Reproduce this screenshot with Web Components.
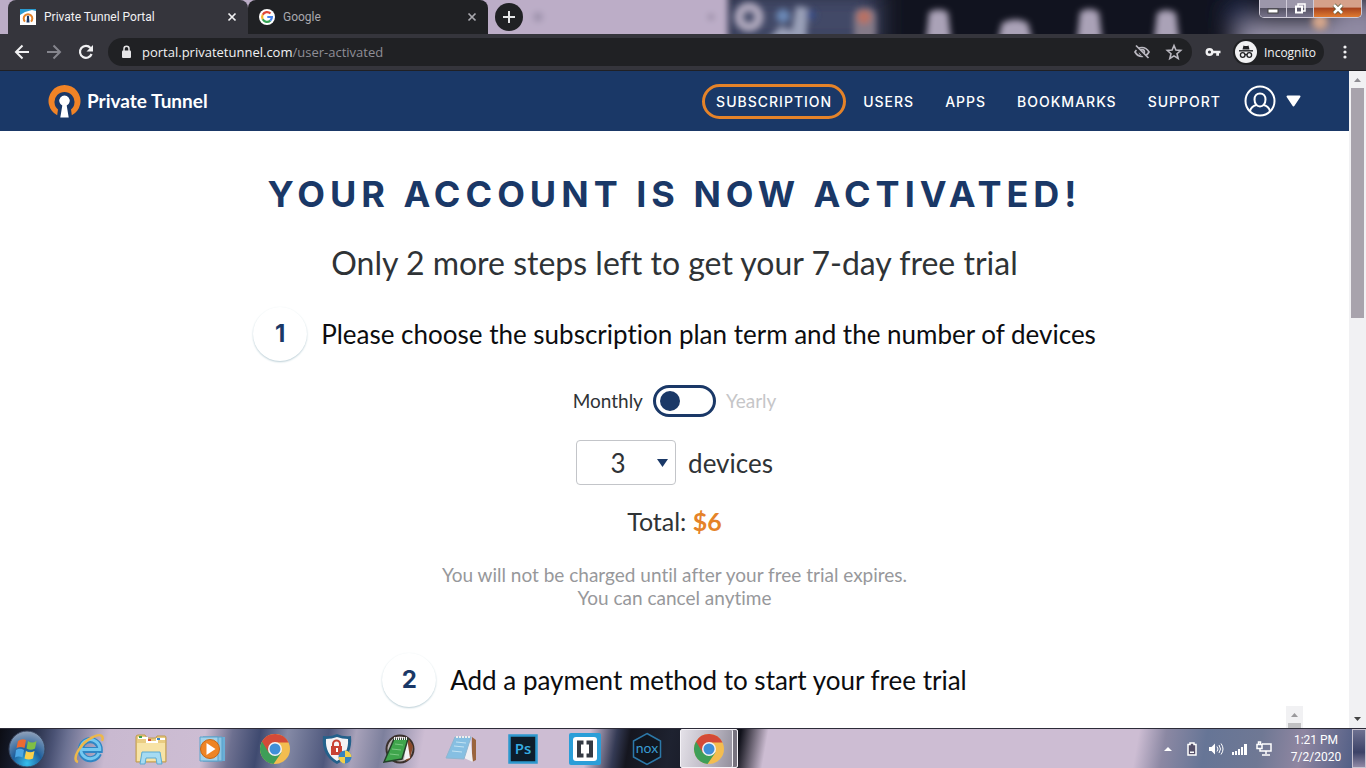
<!DOCTYPE html>
<html lang="en">
<head>
<meta charset="utf-8">
<meta name="viewport" content="width=device-width, initial-scale=1">
<title>Private Tunnel Portal</title>
<style>
    html, body {
        height: 100%;
    }

    body {
        margin: 0;
        display: flex;
        flex-direction: column;
        overflow: hidden;
        font-family: "Open Sans", "Noto Sans", sans-serif;
        --navy: #1a3867;
        --orange: #e58329;
        --frame: #35353c;
        --field: #202124;
        --brand-font: Lato, "Open Sans", sans-serif;
        --title-font: Inter, "Open Sans", sans-serif;
    }
</style>
</head>
<body>

<browser-window>
    <browser-tab slot="tabs" active>
        <svg slot="icon" width="16" height="16" viewBox="0 0 16 16">
            <rect width="16" height="16" fill="#fff"/>
            <path d="M0 0h16v2l-4-1-7 2-5 3z" fill="#2a9bd0"/>
            <path d="M5 12.600A4.300 4.300 0 1 1 11 12.600" fill="none" stroke="#e58329" stroke-width="2"/>
            <path d="M7 8.500a1.200 1.200 0 1 1 2 0l.5 5h-3z" fill="#1a3867"/>
        </svg>
        Private Tunnel Portal
    </browser-tab>
    <browser-tab slot="tabs">
        <svg slot="icon" width="16" height="16" viewBox="0 0 16 16">
            <circle cx="8" cy="8" r="8" fill="#fff"/>
            <g fill="none" stroke-width="2.200">
                <path d="M11.500 4.500A4.900 4.900 0 0 0 3.700 5.700" stroke="#e04637"/>
                <path d="M3.700 5.700a4.900 4.900 0 0 0 0 4.600" stroke="#f3b72c"/>
                <path d="M3.700 10.300a4.900 4.900 0 0 0 7.600 1.300" stroke="#36a355"/>
                <path d="M11.300 11.600A4.900 4.900 0 0 0 12.900 8H8.300" stroke="#4483ee"/>
            </g>
        </svg>
        Google
    </browser-tab>
    <site-header>
        <nav-link current>Subscription</nav-link>
        <nav-link>Users</nav-link>
        <nav-link>Apps</nav-link>
        <nav-link>Bookmarks</nav-link>
        <nav-link>Support</nav-link>
    </site-header>
    <activation-page>
        <step-heading number="1">Please choose the subscription plan term and the number of devices</step-heading>
        <plan-picker></plan-picker>
        <step-heading number="2">Add a payment method to start your free trial</step-heading>
    </activation-page>
</browser-window>

<task-bar></task-bar>

<script>
function define(name, html) {
    const template = document.createElement('template');
    template.innerHTML = html;

    customElements.define(name, class extends HTMLElement {
        constructor() {
            super();
            this.attachShadow({mode: 'open'});
            this.shadowRoot.appendChild(template.content.cloneNode(true));
        }
    });
}

// what shows through the aero glass behind the tabs
define('glass-backdrop', `
<style>
    :host {
        position: absolute;
        inset: 0;
        overflow: hidden;
        background: #11131f;
    }
    svg {
        display: block;
    }
</style>
<svg width="1366" height="40" viewBox="0 0 1366 40" aria-hidden="true">
    <defs>
        <filter id="soft" x="-20%" y="-20%" width="140%" height="140%"><feGaussianBlur stdDeviation="3"/></filter>
        <filter id="wide" x="-50%" y="-50%" width="200%" height="200%"><feGaussianBlur stdDeviation="12"/></filter>
    </defs>
    <g filter="url(#wide)">
        <rect x="720" y="-10" width="160" height="60" fill="#424a68"/>
        <rect x="1235" y="20" width="150" height="40" fill="#9a94ab"/>
        <circle cx="1240" cy="14" r="14" fill="#25355f"/>
        <rect x="1330" y="0" width="60" height="40" fill="#8d87a0"/>
    </g>
    <g filter="url(#soft)">
        <rect x="-20" y="-10" width="748" height="60" rx="6" fill="#bcadc7"/>
        <circle cx="749" cy="17" r="10" fill="none" stroke="#b0a9bd" stroke-width="9"/>
        <circle cx="783" cy="16" r="7" fill="#6a88b5"/>
        <path d="M768 40l12-14 12 4 4-24 12 2-2 32z" fill="#9aa0b8"/>
        <circle cx="811" cy="15" r="5" fill="#394d87"/>
        <rect x="854" y="8" width="22" height="34" rx="8" fill="#847a88"/>
        <circle cx="864" cy="17" r="7" fill="#b97162"/>
        <path d="M926 40l3-28q10-5 19 0l3 28zM998 40l4-17q14-7 26 0l4 17zM1077 40l3-28q9-6 19 0l3 28zM1154 40l3-27q9-6 19 0l3 27z" fill="#aaa2b7"/>
        <circle cx="538" cy="17" r="5" fill="#9d92ab"/>
        <circle cx="711" cy="17" r="3" fill="#8f849d"/>
        <circle cx="1320" cy="22" r="8" fill="#d3a58b"/>
    </g>
</svg>
`);

define('browser-tab', `
<style>
    :host {
        display: flex;
        align-items: center;
        gap: 8px;
        box-sizing: border-box;
        width: 240px;
        height: 34px;
        padding: 0 10px 0 11px;
        border-radius: 8px 8px 0 0;
        background: var(--field);
        color: #a9a8ae;
        font-family: Roboto, "Open Sans", sans-serif;
        font-size: 12px;
        line-height: 16px;
        white-space: nowrap;
    }
    :host([active]) {
        padding-left: 12px;
        background: var(--frame);
        color: #f1f1f3;
    }
    .title {
        flex: 1;
    }
    ::slotted(svg) {
        display: block;
    }
    button {
        display: flex;
        padding: 0;
        border: 0;
        background: none;
        color: inherit;
    }
</style>
<slot name="icon"></slot>
<span class="title"><slot></slot></span>
<button aria-label="Close tab">
    <svg width="12" height="12" viewBox="0 0 12 12"><path d="M2.500 2.500l7 7m0-7l-7 7" stroke="currentColor" stroke-width="1.700"/></svg>
</button>
`);

define('window-controls', `
<style>
    :host {
        display: flex;
        align-self: flex-start;
        margin-left: auto;
        margin-right: 4px;
        border: 1px solid #cfcbd8;
        border-top: 0;
        border-radius: 0 0 5px 5px;
        overflow: hidden;
        position: relative;
    }
    button {
        display: flex;
        align-items: center;
        justify-content: center;
        width: 27px;
        height: 17px;
        padding: 0;
        border: 0;
        border-right: 1px solid #cfcbd8;
        background: linear-gradient(#9c97aa 45%, #565365 50%, #77738a);
    }
    .close {
        width: 47px;
        border-right: 0;
        background: linear-gradient(#d5a18a 40%, #a9451f 50%, #e07b31);
    }
</style>
<button aria-label="Minimize"><svg width="14" height="12" viewBox="0 0 14 12"><rect x="2" y="6" width="10" height="4" fill="#fff" stroke="#444" stroke-width="1"/></svg></button>
<button aria-label="Restore"><svg width="14" height="13" viewBox="0 0 14 13"><path d="M5 4V2h7v7h-2" fill="none" stroke="#fff" stroke-width="1.500"/><rect x="3" y="4.500" width="6" height="6" fill="none" stroke="#fff" stroke-width="2"/></svg></button>
<button class="close" aria-label="Close"><svg width="14" height="12" viewBox="0 0 14 12"><path d="M3 2l8 8m0-8l-8 8" stroke="#553" stroke-width="4"/><path d="M3 2l8 8m0-8l-8 8" stroke="#fff" stroke-width="2.600"/></svg></button>
`);

define('address-bar', `
<style>
    :host {
        display: flex;
        align-items: center;
        box-sizing: border-box;
        height: 37px;
        padding: 0 11px 0 12px;
        gap: 8px;
        background: var(--frame);
        border-bottom: 1px solid #202024;
        color: #f1f1f3;
    }
    svg {
        display: block;
    }
    button {
        padding: 0;
        border: 0;
        background: none;
        color: inherit;
        font: inherit;
    }
    .nav {
        display: flex;
        gap: 12px;
    }
    .field {
        flex: 1;
        display: flex;
        align-items: center;
        gap: 12px;
        height: 28px;
        margin-left: 4px;
        padding: 0 8px 0 10px;
        border-radius: 14px;
        background: var(--field);
        font-size: 13px;
        line-height: 18px;
    }
    .url {
        flex: 1;
        margin-left: -4px;
    }
    .url span {
        color: #8f8e96;
    }
    .incognito {
        display: flex;
        align-items: center;
        gap: 7px;
        height: 26px;
        padding: 0 8px 0 2px;
        border-radius: 13px;
        background: var(--field);
        font-size: 12px;
    }
    .right {
        display: flex;
        align-items: center;
        gap: 11px;
        margin-left: 4px;
    }
</style>
<div class="nav">
    <button aria-label="Back"><svg width="20" height="20" viewBox="0 0 20 20" fill="none" stroke="currentColor" stroke-width="2"><path d="M17 10H4m6.500-6.500L4 10l6.500 6.500"/></svg></button>
    <button aria-label="Forward"><svg width="20" height="20" viewBox="0 0 20 20" fill="none" stroke="#85858d" stroke-width="2"><path d="M3 10h13M9.500 3.500L16 10l-6.500 6.500"/></svg></button>
    <button aria-label="Reload"><svg width="20" height="20" viewBox="0 0 20 20"><path d="M15.600 12A6 6 0 1 1 14.500 5.900" fill="none" stroke="currentColor" stroke-width="2.200"/><path d="M17 3v6.500h-6.500z" fill="currentColor"/></svg></button>
</div>
<div class="field">
    <svg width="16" height="16" viewBox="0 0 16 16"><rect x="4" y="6.500" width="9" height="7.500" rx="1" fill="#e6e6e8"/><path d="M6 7V4.700a2.500 2.500 0 0 1 5 0V7" fill="none" stroke="#e6e6e8" stroke-width="1.500"/></svg>
    <div class="url">portal.privatetunnel.com<span>/user-activated</span></div>
    <button aria-label="Third-party cookies blocked"><svg width="20" height="20" viewBox="0 0 20 20" fill="none" stroke="#bab8c0" stroke-width="1.700"><path d="M3 10c3.500-6 10.500-6 14 0-3.500 6-10.500 6-14 0z"/><circle cx="10" cy="10" r="2.400"/><path d="M3 4.500L15.500 17" stroke="#202124" stroke-width="3"/><path d="M4 3.500L16.500 16"/></svg></button>
    <button aria-label="Bookmark this page"><svg width="20" height="20" viewBox="0 0 20 20" fill="none" stroke="#bab8c0" stroke-width="1.600"><path d="M10 3.500l1.900 4.600 4.800.4-3.700 3.200 1.200 4.800-4.200-2.600-4.200 2.600L7 11.700 3.300 8.500l4.800-.4z"/></svg></button>
</div>
<div class="right">
    <button aria-label="Saved passwords"><svg width="18" height="16" viewBox="0 0 18 16"><circle cx="5.500" cy="8" r="2.800" fill="none" stroke="#f1f1f3" stroke-width="2.400"/><path d="M8 6.800h8.500v2.400H15v2.600h-2.800V9.200H8z" fill="#f1f1f3"/></svg></button>
    <div class="incognito">
        <svg width="22" height="22" viewBox="0 0 22 22"><circle cx="11" cy="11" r="11" fill="#f1f1f3"/><path d="M7.500 8.500L8.500 4.500q2.500 1 5 0l1 4z" fill="#202124"/><path d="M4 9.800h14" stroke="#202124" stroke-width="1.400"/><g fill="none" stroke="#202124" stroke-width="1.300"><circle cx="7.700" cy="14" r="2.300"/><circle cx="14.300" cy="14" r="2.300"/><path d="M10 14q1-1 2 0"/></g></svg>
        Incognito
    </div>
    <button aria-label="Menu"><svg width="20" height="18" viewBox="0 0 20 18" fill="#f1f1f3"><circle cx="10" cy="4" r="1.600"/><circle cx="10" cy="9" r="1.600"/><circle cx="10" cy="14" r="1.600"/></svg></button>
</div>
`);

define('scroll-track', `
<style>
    :host {
        display: flex;
        flex-direction: column;
        width: 17px;
        background: #f1f1f3;
    }
    svg {
        display: block;
    }
    .thumb {
        height: 35%;
        margin: 0 2px auto;
        background: #a8a3ac;
    }
</style>
<svg width="17" height="17" viewBox="0 0 17 17"><path d="M5 11l3.500-4 3.500 4z" fill="#8f8d93"/></svg>
<div class="thumb"></div>
<svg width="17" height="17" viewBox="0 0 17 17"><path d="M5 6h7l-3.500 4z" fill="#444"/></svg>
`);

define('browser-window', `
<style>
    :host {
        flex: 1;
        display: flex;
        flex-direction: column;
        min-height: 0;
    }
    .tabs {
        position: relative;
        display: flex;
        align-items: center;
        height: 34px;
        padding-left: 8px;
    }
    .tabs ::slotted(browser-tab) {
        position: relative;
    }
    .new-tab {
        position: relative;
        display: flex;
        align-items: center;
        justify-content: center;
        width: 28px;
        height: 28px;
        margin-left: 7px;
        padding: 0;
        border: 0;
        border-radius: 50%;
        background: var(--field);
    }
    .view {
        flex: 1;
        display: flex;
        min-height: 0;
    }
    main {
        position: relative;
        flex: 1;
        background: #fff;
        overflow: hidden;
    }
    /* a second frame peeks out over the page bottom */
    .frame-scroll {
        position: absolute;
        right: 46px;
        bottom: 0;
        width: 17px;
        height: 22px;
        background: #f1f1f3;
    }
    .frame-scroll svg {
        display: block;
    }
</style>
<div class="tabs">
    <glass-backdrop></glass-backdrop>
    <slot name="tabs"></slot>
    <button class="new-tab" aria-label="New tab"><svg width="14" height="14" viewBox="0 0 14 14"><path d="M7 1v12M1 7h12" stroke="#e6e6e8" stroke-width="2"/></svg></button>
    <window-controls></window-controls>
</div>
<address-bar></address-bar>
<div class="view">
    <main>
        <slot></slot>
        <div class="frame-scroll"><svg width="17" height="22" viewBox="0 0 17 22"><path d="M5 11l3.500-4 3.500 4z" fill="#9a999c"/><path d="M2 17h13v5H2z" fill="#c1c1c3"/></svg></div>
    </main>
    <scroll-track></scroll-track>
</div>
`);

define('nav-link', `
<style>
    :host {
        display: block;
    }
    a {
        display: block;
        padding: 5px 11px;
        border: 3px solid transparent;
        border-radius: 18px;
        color: #fff;
        font-family: var(--title-font);
        font-size: 14px;
        font-weight: 500;
        line-height: 19px;
        letter-spacing: 1px;
        text-decoration: none;
        text-transform: uppercase;
    }
    :host([current]) a {
        border-color: var(--orange);
    }
</style>
<a href="#"><slot></slot></a>
`);

define('site-header', `
<style>
    :host {
        display: flex;
        align-items: center;
        justify-content: space-between;
        height: 60px;
        padding: 0 48px;
        background: var(--navy);
        color: #fff;
    }
    svg {
        display: block;
    }
    .logo {
        display: flex;
        align-items: center;
        gap: 6px;
        color: #fff;
        font-family: var(--brand-font);
        font-size: 19px;
        font-weight: 700;
        line-height: 24px;
        text-decoration: none;
    }
    nav {
        display: flex;
        align-items: center;
        gap: 3px;
    }
    .account {
        display: flex;
        align-items: center;
        gap: 10px;
        margin-left: 6px;
        padding: 0;
        border: 0;
        background: none;
    }
</style>
<a class="logo" href="#">
    <svg width="33" height="33" viewBox="0 0 33 33"><path d="M9.200 30.300L10 24.500a10 10 0 1 1 13 0l.8 5.800A16 16 0 1 0 9.200 30.300z" fill="#f08326"/><path d="M14.300 20.500a5.200 5.200 0 1 1 4.400 0l2 12h-8.400z" fill="#fff"/></svg>
    Private Tunnel
</a>
<nav>
    <slot></slot>
    <button class="account" aria-label="Account">
        <svg width="32" height="32" viewBox="0 0 32 32" fill="none" stroke="#fff" stroke-width="2"><circle cx="16" cy="16" r="14.500"/><path d="M16 8.500c3.500 0 5.500 2.700 5.500 6 0 4-2.500 7-5.500 7s-5.500-3-5.500-7c0-3.300 2-6 5.500-6z"/><path d="M6 26c1-4 3.500-5.500 7-6m13 6c-1-4-3.500-5.500-7-6"/></svg>
        <svg width="15" height="12" viewBox="0 0 15 12"><path d="M1.500 1.500h12l-6 9z" fill="#fff" stroke="#fff" stroke-width="2" stroke-linejoin="round"/></svg>
    </button>
</nav>
`);

define('activation-page', `
<style>
    :host {
        display: flex;
        flex-direction: column;
        align-items: center;
        padding-top: 40px;
        color: #2f3336;
        font-family: var(--brand-font);
        font-variant-ligatures: none;
    }
    h1, p {
        margin: 0;
        text-align: center;
    }
    h1 {
        color: var(--navy);
        font-family: var(--title-font);
        font-size: 36px;
        font-weight: 700;
        line-height: 46px;
        letter-spacing: 5px;
        text-transform: uppercase;
    }
    p {
        margin: 24px 0 22px;
        font-size: 32px;
        line-height: 44px;
    }
</style>
<h1>Your account is now activated!</h1>
<p>Only 2 more steps left to get your 7-day free trial</p>
<slot></slot>
`);

customElements.define('step-heading', class extends HTMLElement {
    constructor() {
        super();
        this.attachShadow({mode: 'open'});
        this.shadowRoot.innerHTML = `
<style>
    :host {
        display: block;
    }
    h2 {
        display: flex;
        align-items: center;
        gap: 14px;
        margin: 0;
        color: #0c0d0f;
        font-size: 26px;
        font-weight: 400;
        line-height: 32px;
    }
    .number {
        flex: none;
        width: 54px;
        height: 54px;
        border-radius: 50%;
        box-shadow: 0 1px 2px #b9cdd5;
        color: var(--navy);
        font-family: var(--title-font);
        font-size: 24px;
        font-weight: 700;
        line-height: 54px;
        text-align: center;
    }
</style>
<h2><span class="number">${this.getAttribute('number')}</span><slot></slot></h2>
`;
    }
});

define('plan-picker', `
<style>
    :host {
        display: flex;
        flex-direction: column;
        align-items: center;
        padding: 24px 0 44px;
    }
    .term {
        display: flex;
        align-items: center;
        gap: 10px;
        font-size: 19px;
        line-height: 32px;
    }
    .yearly {
        color: #c6c6c8;
    }
    input {
        appearance: none;
        display: flex;
        align-items: center;
        box-sizing: border-box;
        width: 63px;
        height: 32px;
        margin: 0;
        padding: 0 4px;
        border: 3px solid var(--navy);
        border-radius: 16px;
    }
    input::before {
        content: "";
        width: 20px;
        height: 20px;
        border-radius: 50%;
        background: var(--navy);
    }
    input:checked {
        justify-content: flex-end;
    }
    .devices {
        display: flex;
        align-items: center;
        gap: 12px;
        margin: 23px 0 20px;
        font-size: 26px;
        line-height: 32px;
    }
    .select {
        display: grid;
        align-items: center;
    }
    .select > * {
        grid-area: 1 / 1;
    }
    .select svg {
        justify-self: end;
        margin-right: 7px;
        pointer-events: none;
    }
    select {
        appearance: none;
        box-sizing: border-box;
        width: 100px;
        height: 45px;
        padding: 0 16px 0 0;
        border: 1px solid #c3c5c9;
        border-radius: 4px;
        background: #fff;
        color: inherit;
        font: inherit;
        text-align-last: center;
    }
    .total {
        font-size: 25px;
        line-height: 32px;
    }
    .total strong {
        color: var(--orange);
    }
    .note {
        margin-top: 26px;
        color: #97989b;
        font-size: 19px;
        line-height: 23px;
        text-align: center;
    }
</style>
<div class="term">
    <label for="term">Monthly</label>
    <input type="checkbox" role="switch" id="term">
    <label class="yearly" for="term">Yearly</label>
</div>
<div class="devices">
    <div class="select">
        <select id="devices">
            <option>1</option>
            <option>2</option>
            <option selected>3</option>
            <option>4</option>
            <option>5</option>
        </select>
        <svg width="13" height="10" viewBox="0 0 13 10"><path d="M1 1h11L6.500 9z" fill="#1a3867"/></svg>
    </div>
    <label for="devices">devices</label>
</div>
<div class="total">Total: <strong>$6</strong></div>
<div class="note">You will not be charged until after your free trial expires.<br>You can cancel anytime</div>
`);

define('task-button', `
<style>
    :host {
        display: block;
        width: 62px;
    }
    button {
        display: flex;
        align-items: center;
        justify-content: center;
        box-sizing: border-box;
        width: 58px;
        height: 39px;
        padding: 0;
        border: 1px solid transparent;
        border-radius: 2px;
        background: none;
    }
    :host([active]) button {
        border-color: #f4f2f7;
        background: linear-gradient(100deg, #e4e1e8, #bcb8c4 50%, #8b8895);
        box-shadow: inset -4px 0 #77737f, inset -5px 0 #f4f2f7;
    }
</style>
<button><slot></slot></button>
`);

const chromeIcon = `
<svg width="32" height="32" viewBox="0 0 32 32">
    <circle cx="16" cy="16" r="15" fill="#f3bd50"/>
    <path d="M16 16L3 8.500A15 15 0 0 0 14.500 31L22.500 19.500z" fill="#3e9e58"/>
    <path d="M3 8.500A15 15 0 0 1 29.500 9.500H16L10 20z" fill="#d44a38"/>
    <circle cx="16" cy="16" r="7" fill="#f4f2f3"/>
    <circle cx="16" cy="16" r="5.500" fill="#3f8fd8"/>
</svg>`;

define('task-bar', `
<style>
    :host {
        display: flex;
        align-items: center;
        height: 39px;
        border-top: 1px solid #2c2b38;
        padding-left: 8px;
        background: linear-gradient(100deg, #0c0d14 0, #1b2338 2%, #4a5274 4%, #6b7192 5%, #c9b9d0 8%, #cdbdd3 15%, #6d7090 17%, #3f4a70 19%, #858aa6 21%, #4f587d 24%, #a8a2ba 26%, #7d809d 28%, #cdbdd3 31%, #cdbdd3 43%, #343a54 45%, #15161f 46%, #1e2230 49%, #10111a 54%, #cdbdd3 56%, #cdbdd3 83%, #8b88a3 85%, #667596 88%, #6f7894 92%, #8f86a1 95%, #43557f 100%);
        color: #fff;
    }
    svg {
        display: block;
    }
    .start {
        width: 52px;
        padding: 0;
        border: 0;
        background: none;
    }
    .tray {
        display: flex;
        align-items: center;
        gap: 8px;
        margin-left: auto;
    }
    .clock {
        width: 60px;
        margin-left: 6px;
        font-family: Roboto, "Open Sans", sans-serif;
        font-size: 12px;
        line-height: 17px;
        text-align: center;
    }
    .desktop {
        align-self: stretch;
        width: 14px;
        margin-left: 6px;
        padding: 0;
        border: 1px solid #c7c2d0;
        background: linear-gradient(#6e7191, #3c4267 60%, #9089a5);
    }
</style>
<button class="start" aria-label="Start">
    <svg width="38" height="38" viewBox="0 0 38 38">
        <defs><radialGradient id="orb" cx=".5" cy=".9" r=".9"><stop offset="0" stop-color="#35c0ee"/><stop offset=".45" stop-color="#1f5f9c"/><stop offset="1" stop-color="#93a3bb"/></radialGradient></defs>
        <circle cx="19" cy="19" r="18" fill="url(#orb)" stroke="#39455e"/>
        <path d="M10 11q4-3 8-1l-1.500 8q-4-2-8 0z" fill="#ec6a32"/><path d="M20 11q4 3 8.500 0L27 18.500q-4 2.500-8.500 0z" fill="#7fbf45"/><path d="M8 20q4-2.500 8 0l-1.500 7.500q-4-2-7.500 0z" fill="#4ba7e5"/><path d="M18 21q4 2.500 8.500 0L25 28.500q-4 2-8.500 0z" fill="#fad04b"/>
    </svg>
</button>
<task-button title="Internet Explorer"><svg width="32" height="32" viewBox="0 0 32 32">
    <g fill="none"><path d="M26 20.500A9.500 9.500 0 1 1 26.800 17H9" stroke="#2f86c4" stroke-width="6"/><path d="M26 20A9.500 9.500 0 1 1 26.800 16.500H9" stroke="#74c8f0" stroke-width="3"/>
    <path d="M5 29C-2 27 7 10 20 4c8-4 11-1 9 4" stroke="#edb849" stroke-width="2.500"/></g></svg></task-button>
<task-button title="Explorer"><svg width="32" height="32" viewBox="0 0 32 32">
    <path d="M1 4q0-2 2-2h7l2 3h9l1-2h8q1 0 1 2v24H1z" fill="#e9cc81" stroke="#bf9a4f"/><path d="M3 5h9v4h10v-3h8" stroke="#fff" stroke-width="2" fill="none"/><path d="M4 4h3" stroke="#3aa04c" stroke-width="2"/><path d="M13 7h3" stroke="#d64c35" stroke-width="2"/><path d="M22 6h3" stroke="#3c83c5" stroke-width="2"/><path d="M2 10h28v18H2z" fill="#f7e3a6"/>
    <path d="M5 31l2-12h18l2 12h-5l-1-6H11l-1 6z" fill="#a5dbf2" stroke="#5ba9d1"/></svg></task-button>
<task-button title="Media Player"><svg width="30" height="30" viewBox="0 0 30 30">
    <path d="M8 3h19v24H8z" fill="#6aaed6"/><path d="M5 3h19v24H5z" fill="#8cc5e3" stroke="#579fc9"/><path d="M2 3h18v24H2z" fill="#a3d2ea" stroke="#5ba2ca"/><circle cx="12" cy="15" r="9.500" fill="#ee8424" stroke="#c66717"/><path d="M8.500 9l9 6-9 6z" fill="#fff"/></svg></task-button>
<task-button title="Google Chrome">${chromeIcon}</task-button>
<task-button title="VPN"><svg width="32" height="32" viewBox="0 0 32 32">
    <path d="M16 1q6 3 14 2 2 20-14 28Q0 23 2 3q8 1 14-2z" fill="#24618b"/><path d="M16 4q5 2 11 2 1 15-11 22Q4 21 5 6q6 0 11-2z" fill="#f5f3f5"/><path d="M12 14v-3a3.500 3.500 0 0 1 7 0v3" fill="none" stroke="#c94335" stroke-width="2"/><rect x="10" y="13" width="11" height="9" fill="#c94335"/><path d="M16 15v4" stroke="#fff" stroke-width="2"/>
    <circle cx="24" cy="24" r="6.500" fill="#3583c0"/><path d="M24 17.500a6.500 6.500 0 0 1 6.500 6.500H24zM24 24v6.500a6.500 6.500 0 0 1-6.500-6.500z" fill="#f2ce4a"/></svg></task-button>
<task-button title="Notepad++"><svg width="32" height="32" viewBox="0 0 32 32">
    <circle cx="17" cy="16" r="13.500" fill="#b9b0b2" stroke="#3a302c" stroke-width="2"/><path d="M25 5l5 8-3 13-4 2z" fill="#8c4a2b"/><path d="M24 5l3 20-6 2z" fill="#f4f2f4"/><path d="M11 6h14l-6 20-18 3z" fill="#3fa54c" stroke="#24402a" stroke-width="1.500"/><path d="M12 11l8 1M9 16l9 1M7 21l9 1" stroke="#7bc983"/><path d="M11 5.500h14" stroke="#f3f0f2" stroke-width="3" stroke-dasharray="1 1"/></svg></task-button>
<task-button title="Notepad"><svg width="32" height="32" viewBox="0 0 32 32">
    <path d="M27 4l4 3v20l-4 2z" fill="#9a643e"/><path d="M25 4l3 25-9-4z" fill="#f0eff3"/><path d="M10 4h16l-7 22-18-1z" fill="#86bfe2" stroke="#8fb6d0"/><path d="M11 9l10 1M9 13l10 1M7 18l10 1" stroke="#c3e3f3"/><path d="M11 4h14" stroke="#eee" stroke-width="2" stroke-dasharray="2 1"/></svg></task-button>
<task-button title="Photoshop"><svg width="30" height="30" viewBox="0 0 30 30">
    <rect x="1.500" y="1.500" width="27" height="27" fill="#0d1d2b" stroke="#2d98ce" stroke-width="2.500"/><text x="15" y="20" fill="#37aee4" font-family="Open Sans, sans-serif" font-size="15" font-weight="600" text-anchor="middle">Ps</text></svg></task-button>
<task-button title="Brackets"><svg width="32" height="32" viewBox="0 0 32 32">
    <rect width="32" height="32" rx="2" fill="#2a9ed8"/><rect x="4" y="4" width="24" height="24" rx="3" fill="#fff"/><path d="M14.500 9.500H10v13h4.500M17.500 9.500H22v13h-4.500" fill="none" stroke="#343a43" stroke-width="4"/></svg></task-button>
<task-button title="Nox"><svg width="32" height="34" viewBox="0 0 32 34">
    <path d="M16 1.500l13.500 7.500v16L16 32.500 2.500 25V9z" fill="#11161f" stroke="#2c78a8" stroke-width="1.500"/><text x="16" y="21" fill="#399bd0" font-family="Lato, sans-serif" font-size="14" text-anchor="middle">nox</text></svg></task-button>
<task-button active title="Google Chrome">${chromeIcon}</task-button>
<div class="tray">
    <svg width="16" height="16" viewBox="0 0 16 16"><path d="M4 10l4-4 4 4z" fill="#fff"/></svg>
    <svg width="16" height="16" viewBox="0 0 16 16"><path d="M6 2h4v1.500h2V14H4V3.500h2z" fill="#55506a" stroke="#fff" stroke-width="1.500"/><path d="M6 10.500h4V12H6z" fill="#fff"/></svg>
    <svg width="16" height="16" viewBox="0 0 16 16"><path d="M1 6h2.500L7 2.500v11L3.500 10H1z" fill="#fff"/><path d="M9 5.500q2 2.500 0 5M11 4q3 4 0 8M13 2.500q4 5.500 0 11" fill="none" stroke="#fff"/></svg>
    <svg width="16" height="16" viewBox="0 0 16 16" fill="#fff"><path d="M0 11h2v3H0zM3 10h2v4H3zM6 8h2v6H6zM9 6h2v8H9zM12 3h3v11h-3z"/></svg>
    <svg width="16" height="16" viewBox="0 0 16 16" fill="none" stroke="#fff" stroke-width="1.500"><path d="M6 3h9v7H4V8M10 10v3M6 14h8"/><path d="M1 3.500h5v4H1zM2.500 3.500V1h2v2.500" /></svg>
    <div class="clock">1:21 PM<br>7/2/2020</div>
</div>
<button class="desktop" aria-label="Show desktop"></button>
`);
</script>
</body>
</html>
